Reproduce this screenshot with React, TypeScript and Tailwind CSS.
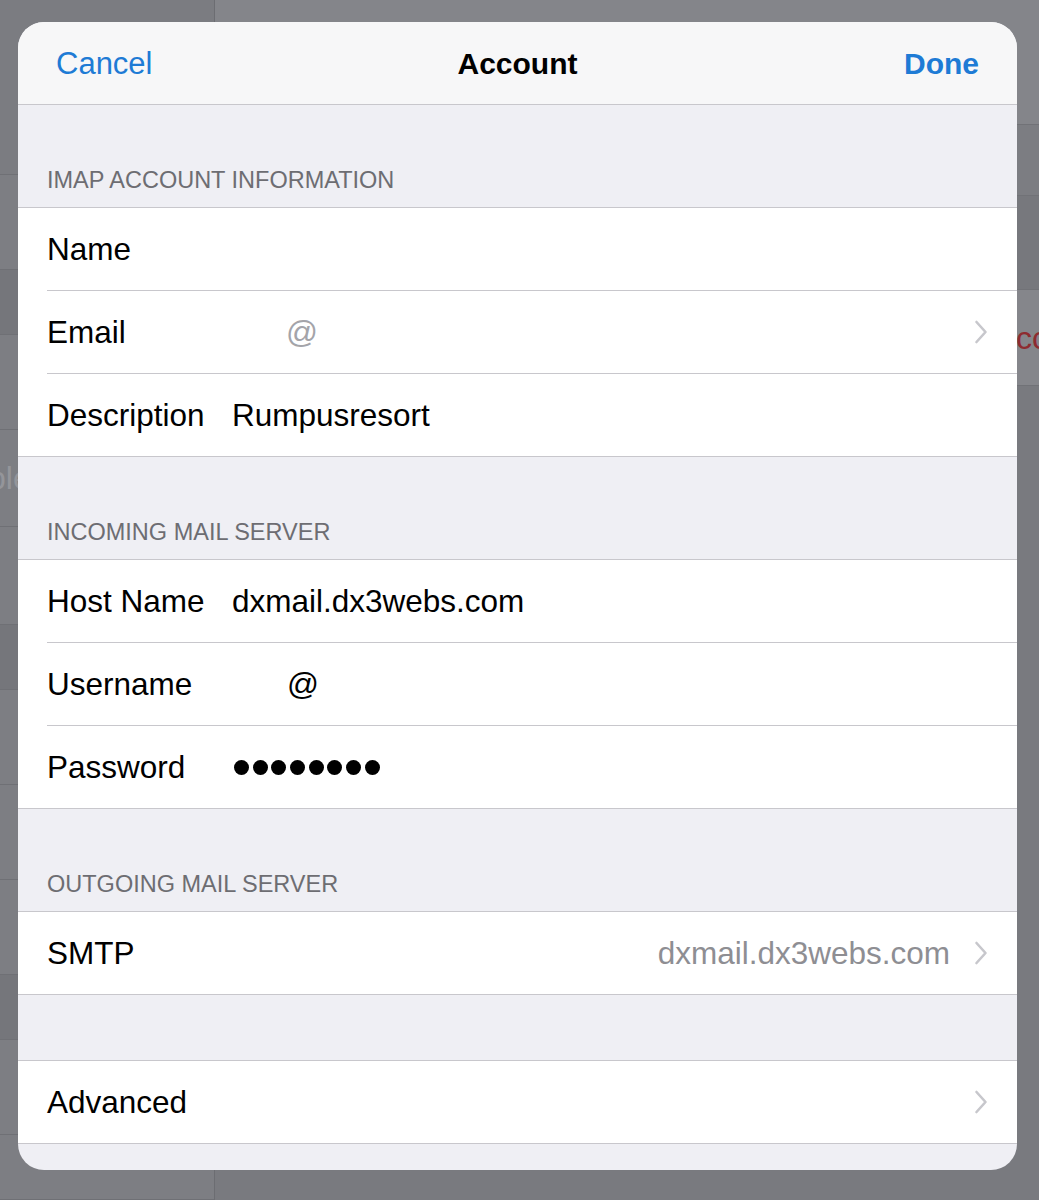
import React from 'react'

type Row = {
  label: string
  value?: string
  kind?: 'text' | 'at' | 'atMuted' | 'dots' | 'right'
  chevron?: boolean
}

const sections: { title?: string; rows: Row[] }[] = [
  {
    title: 'IMAP ACCOUNT INFORMATION',
    rows: [
      { label: 'Name' },
      { label: 'Email', kind: 'atMuted', chevron: true },
      { label: 'Description', value: 'Rumpusresort', kind: 'text' },
    ],
  },
  {
    title: 'INCOMING MAIL SERVER',
    rows: [
      { label: 'Host Name', value: 'dxmail.dx3webs.com', kind: 'text' },
      { label: 'Username', kind: 'at' },
      { label: 'Password', kind: 'dots' },
    ],
  },
  {
    title: 'OUTGOING MAIL SERVER',
    rows: [{ label: 'SMTP', value: 'dxmail.dx3webs.com', kind: 'right', chevron: true }],
  },
]

// dimmed settings screen behind the sheet
const sideRows = [
  { h: 'h-[175px]', tone: 'bg-[#7b7c81]' },
  { h: 'h-[95px]', tone: 'bg-[#7d7e83]' },
  { h: 'h-[65px]', tone: 'bg-[#75767b]' },
  { h: 'h-[95px]', tone: 'bg-[#7d7e83]' },
  { h: 'h-[97px]', tone: 'bg-[#7d7e83]', text: 'ple' },
  { h: 'h-[98px]', tone: 'bg-[#7d7e83]' },
  { h: 'h-[65px]', tone: 'bg-[#75767b]' },
  { h: 'h-[95px]', tone: 'bg-[#7d7e83]' },
  { h: 'h-[95px]', tone: 'bg-[#7d7e83]' },
  { h: 'h-[95px]', tone: 'bg-[#7d7e83]' },
  { h: 'h-[65px]', tone: 'bg-[#75767b]' },
  { h: 'h-[95px]', tone: 'bg-[#7d7e83]' },
  { h: 'h-[65px]', tone: 'bg-[#7d7e83]' },
]

function Chevron() {
  return (
    <svg width="14" height="24" viewBox="0 0 14 24" className="shrink-0">
      <path
        d="M2.5 2 L11.5 12 L2.5 22"
        fill="none"
        stroke="#c7c7cc"
        strokeWidth="2.6"
        strokeLinecap="round"
        strokeLinejoin="round"
      />
    </svg>
  )
}

function Value({ row }: { row: Row }) {
  switch (row.kind) {
    case 'text':
      return <span className="text-black">{row.value}</span>
    case 'atMuted':
      return <span className="ml-[54px] text-[#a4a4a9]">@</span>
    case 'at':
      return <span className="ml-[55px] text-black">@</span>
    case 'dots':
      return (
        <div className="ml-[2px] flex gap-[3.7px]">
          {Array.from({ length: 8 }).map((_, i) => (
            <span key={i} className="h-[15px] w-[15px] rounded-full bg-black" />
          ))}
        </div>
      )
    default:
      return null
  }
}

function SettingsRow({ row }: { row: Row }) {
  return (
    <div className="flex items-center pr-[29px] text-[31.5px] leading-[82px]">
      <span className="w-[185px] shrink-0 text-black">{row.label}</span>
      <div className="flex flex-1 items-center">
        <Value row={row} />
      </div>
      {row.kind === 'right' && <span className="mr-[24px] text-[#8e8e93]">{row.value}</span>}
      {row.chevron && <Chevron />}
    </div>
  )
}

function Group({ rows }: { rows: Row[] }) {
  return (
    <div className="border-y border-[#c8c7cc] bg-white pl-[29px]">
      <div className="divide-y divide-[#c8c7cc]">
        {rows.map((row) => (
          <SettingsRow key={row.label} row={row} />
        ))}
      </div>
    </div>
  )
}

export default function App() {
  return (
    <div className="relative h-[1200px] w-[1039px] overflow-hidden bg-[#7b7c81] font-['Liberation_Sans',Arial,sans-serif]">
      {/* Background split view */}
      <div className="flex h-full">
        <div className="flex w-[215px] shrink-0 flex-col border-r border-[#6c6d72]">
          {sideRows.map((r, i) => (
            <div
              key={i}
              className={`${r.h} ${r.tone} flex items-center overflow-hidden border-b border-[#6f7075] text-[32px] text-[#94959a]`}
            >
              {r.text && <span className="-ml-[12px] whitespace-nowrap">{r.text}</span>}
            </div>
          ))}
        </div>
        <div className="flex min-w-0 flex-1 flex-col overflow-hidden">
          <div className="h-[125px] border-b border-[#717277] bg-[#84858a]" />
          <div className="h-[70px] bg-[#7c7d82]" />
          <div className="h-[95px] border-y border-[#717277] bg-[#77787d]" />
          <div className="flex h-[95px] items-center bg-[#85868b] pl-[680px] text-[32px] text-[#8e2b30]">
            <span className="whitespace-nowrap">Delete Account</span>
          </div>
          <div className="flex-1 border-t border-[#717277] bg-[#797a7f]" />
        </div>
      </div>

      {/* Account sheet */}
      <div className="absolute left-[18px] top-[22px] flex h-[1148px] w-[999px] flex-col overflow-hidden rounded-[26px] bg-[#efeff4]">
        <div className="grid h-[83px] shrink-0 grid-cols-3 items-center border-b border-[#c8c7cc] bg-[#f7f7f8] px-[38px]">
          <span className="pt-[3px] text-[31px] text-[#1e7bd5]">Cancel</span>
          <span className="text-center text-[30px] font-bold text-black">Account</span>
          <span className="text-right text-[30px] font-bold text-[#1e7bd5]">Done</span>
        </div>

        {sections.map((s) => (
          <div key={s.title}>
            <div className="h-[102px] px-[29px] pt-[61px] text-[23.5px] leading-[28px] text-[#6d6d72]">
              {s.title}
            </div>
            <Group rows={s.rows} />
          </div>
        ))}

        <div className="h-[65px] shrink-0" />
        <Group rows={[{ label: 'Advanced', chevron: true }]} />
        <div className="flex-1" />
      </div>
    </div>
  )
}
